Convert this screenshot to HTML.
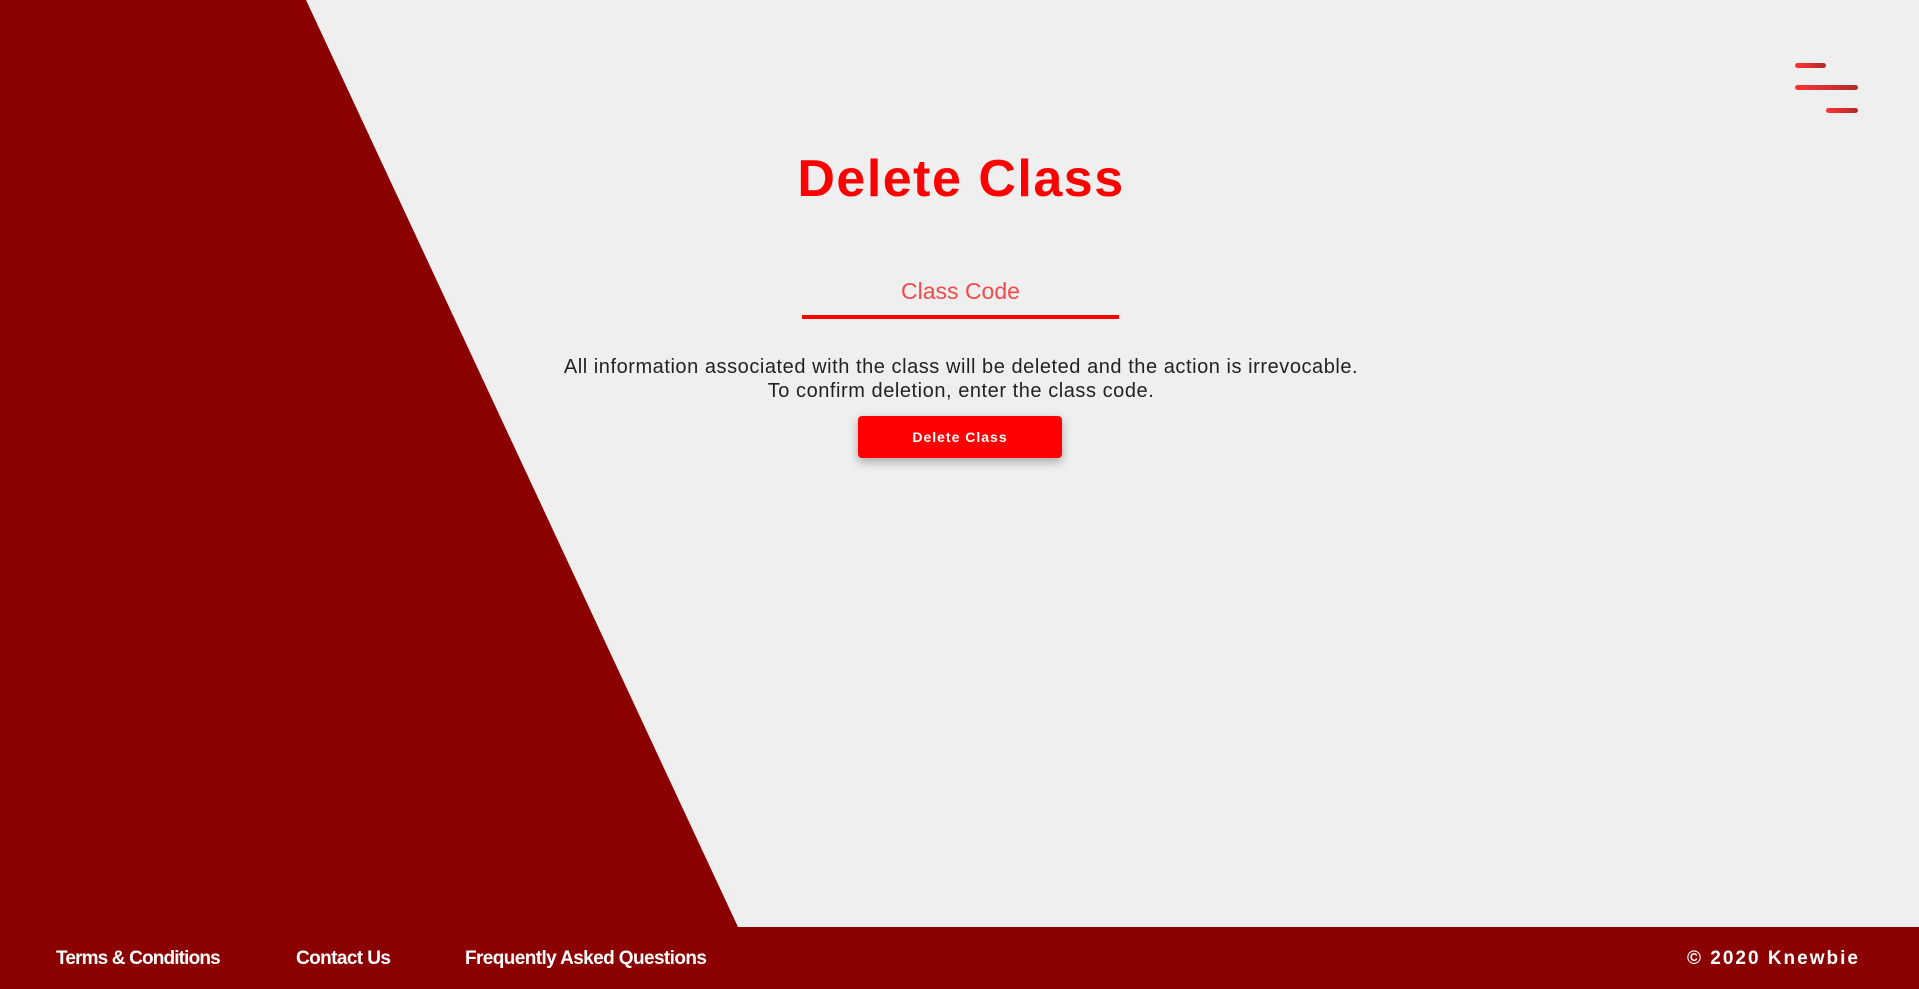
<!DOCTYPE html>
<html><head><meta charset="utf-8"><style>
html,body{margin:0;padding:0;}
body{width:1919px;height:989px;position:relative;overflow:hidden;background:#efefef;font-family:"Liberation Sans",sans-serif;}
.tri{position:absolute;left:0;top:0;width:1919px;height:989px;}
h1{position:absolute;left:0;width:1922px;top:146px;margin:0;text-align:center;color:#ff0000;font-size:52px;font-weight:bold;line-height:66px;letter-spacing:1.5px;}
.cc{position:absolute;left:802px;width:317px;top:276px;text-align:center;color:#f24a4a;font-size:23px;line-height:30px;}
.ul{position:absolute;left:802px;width:317px;top:315px;height:4px;background:#ff0000;}
.p{position:absolute;left:0;width:1922px;top:355px;text-align:center;color:#222;font-size:20px;line-height:24px;letter-spacing:0.55px;}
.btn{position:absolute;left:858px;top:416px;width:204px;height:42px;background:#ff0000;border-radius:4px;box-shadow:0 4px 10px rgba(0,0,0,0.3);color:#fff;font-weight:bold;font-size:14px;letter-spacing:1px;text-align:center;line-height:42px;}
.hb{position:absolute;height:5px;border-radius:3px;background:linear-gradient(90deg,#ff3333,#b02a2a);}
.foot{position:absolute;left:0;top:927px;width:1919px;height:62px;background:#8b0000;color:#fff;font-weight:bold;font-size:19px;}
.foot span{position:absolute;top:20px;line-height:24px;}
</style></head><body>
<svg class="tri" viewBox="0 0 1919 989"><polygon points="0,0 306,0 738,927 0,927" fill="#8b0000"/></svg>
<h1>Delete Class</h1>
<div class="cc">Class Code</div>
<div class="ul"></div>
<div class="p">All information associated with the class will be deleted and the action is irrevocable.<br>To confirm deletion, enter the class code.</div>
<div class="btn">Delete Class</div>
<div class="hb" style="left:1795px;top:63px;width:31px"></div>
<div class="hb" style="left:1795px;top:85px;width:63px"></div>
<div class="hb" style="left:1826px;top:108px;width:32px"></div>
<div class="foot">
<span style="left:56px;letter-spacing:-0.85px">Terms &amp; Conditions</span>
<span style="left:296px;letter-spacing:-0.6px">Contact Us</span>
<span style="left:465px;letter-spacing:-0.6px">Frequently Asked Questions</span>
<span style="left:1687px;letter-spacing:2px">© 2020 Knewbie</span>
</div>
</body></html>
